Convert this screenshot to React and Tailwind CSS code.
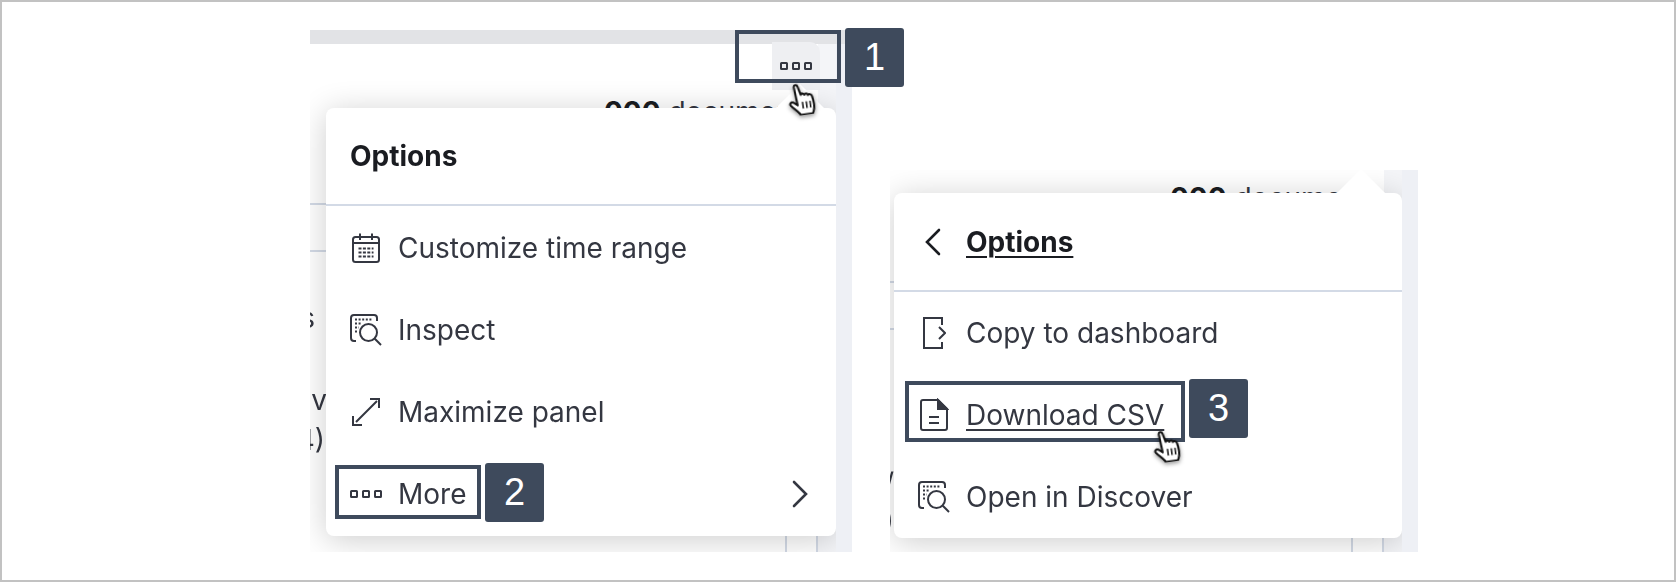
function Boxes({ className }) {
  return (
    <svg width="32" height="8" viewBox="0 0 32 8" fill="none" stroke="#343741" strokeWidth="2" className={className}>
      <rect x="1" y="1" width="6" height="6" rx="0.5" />
      <rect x="13" y="1" width="6" height="6" rx="0.5" />
      <rect x="25" y="1" width="6" height="6" rx="0.5" />
    </svg>
  );
}

function Calendar() {
  return (
    <svg width="30" height="32" viewBox="0 0 30 32" fill="none" stroke="#343741" strokeWidth="2">
      <rect x="2" y="5" width="26" height="25" rx="2.5" />
      <path d="M2 11h26M9 1.5V8M21 1.5V8" />
      <path strokeWidth="2" strokeDasharray="3 1.4" d="M7.5 16.5h15M7.5 20.5h15M7.5 24.5h15" />
    </svg>
  );
}

function Inspect() {
  return (
    <svg width="32" height="32" viewBox="0 0 32 32" fill="none" stroke="#343741" strokeWidth="2">
      <path d="M6 27H4a3 3 0 0 1-3-3V4a3 3 0 0 1 3-3h20a3 3 0 0 1 3 3v3" />
      <path strokeDasharray="2 1.6" d="M5 5.5h18M5 9.5h7M5 13.5h4M5 17.5h3" />
      <circle cx="18.5" cy="18.5" r="8.5" />
      <path d="M24.8 24.8 31 31" />
    </svg>
  );
}

function Maximize() {
  return (
    <svg width="30" height="30" viewBox="0 0 30 30" fill="none" stroke="#343741" strokeWidth="2">
      <path d="M19 2h9v9M2 19v9h9M26 4 5 25" />
    </svg>
  );
}

function CopyDash() {
  return (
    <svg width="24" height="34" viewBox="0 0 24 34" fill="none" stroke="#343741" strokeWidth="2">
      <path d="M20 9V2H2v30h18v-6" />
      <path d="M17 11l6 6-6 6" />
    </svg>
  );
}

function Doc() {
  return (
    <svg width="30" height="34" viewBox="0 0 30 34" fill="none" stroke="#343741" strokeWidth="2">
      <path d="M19 2H4a2 2 0 0 0-2 2v26a2 2 0 0 0 2 2h22a2 2 0 0 0 2-2V11z" />
      <path d="M19 2l9 9h-9z" fill="#343741" />
      <path d="M10 19h10M10 25h10" />
    </svg>
  );
}

function ChevronR() {
  return (
    <svg width="16" height="28" viewBox="0 0 16 28" fill="none" stroke="#343741" strokeWidth="2.6" strokeLinecap="round">
      <path d="M2 2l12 12L2 26" />
    </svg>
  );
}

function ChevronL() {
  return (
    <svg width="16" height="28" viewBox="0 0 16 28" fill="none" stroke="#1a1c21" strokeWidth="2.6" strokeLinecap="round">
      <path d="M14 2 2 14l12 12" />
    </svg>
  );
}

function Hand({ className }) {
  return (
    <svg width="32" height="32" viewBox="0 0 32 34" className={className + " -rotate-[8deg]"} style={{ filter: "drop-shadow(0 2px 2px rgba(0,0,0,.4))" }}>
      <path
        d="M8 3.500c-.2-2.600 3.400-3 4-.4l2.200 9.200c.6-1.800 3.400-1.600 3.800.4.800-1.600 3.400-1.200 3.800.8.900-1.200 3.600-.8 4 1.400.9 4 1.400 8 .9 12-.3 2.400-1.300 4.500-2.200 6.500H11.500c-1.500-3-6.500-7.500-9.200-11-1.600-2.300.8-4.300 3-3l4.200 3.500z"
        fill="#fff"
        stroke="#111"
        strokeWidth="2.200"
        strokeLinejoin="round"
      />
      <path d="M15 20v7M19 20v7M23 20v7" stroke="#111" strokeWidth="1.600" />
    </svg>
  );
}

function MenuRow({ icon, label, right, underline }) {
  return (
    <div className="h-[82px] flex items-center pl-6 pr-[28px]">
      <span className="w-8 flex items-center justify-center shrink-0 mr-4">{icon}</span>
      <span className={"text-[28px] text-[#343741] " + (underline ? "underline decoration-2 underline-offset-4" : "")}>{label}</span>
      {right && <span className="ml-auto">{right}</span>}
    </div>
  );
}

function Callout({ n, className, boxClass }) {
  return (
    <div className={"absolute z-30 flex items-start gap-1 " + className}>
      <div className={"mt-[2px] border-4 border-[#3e4a5c] " + boxClass} />
      <div className="w-[59px] h-[59px] rounded-[3px] bg-[#3e4a5c] text-white text-[38px] flex items-center justify-center font-['Liberation_Sans']">
        {n}
      </div>
    </div>
  );
}

function Shot({ width, height, children, topBar, top, fragments }) {
  return (
    <div className="relative overflow-hidden shrink-0" style={{ width, height }}>
      <div className="h-full flex flex-col">
        {topBar && <div className="h-[14px] bg-[#e2e3e6] shrink-0" />}
        <div className="flex-1 flex min-h-0">
          <div className="flex-1 bg-white flex flex-col min-w-0">
            {top}
            <div className="flex flex-col text-[28px] text-[#343741] [will-change:opacity]">{fragments}</div>
            <div className="mt-auto self-end h-[20px] w-[33px] border-x-2 border-[#d3dae6]" />
          </div>
          <div className="w-[18px] bg-[#f4f5f8]" />
          <div className="w-4 bg-[#eef0f5] relative z-20" />
        </div>
      </div>
      {children}
    </div>
  );
}

function DocCount({ className }) {
  return (
    <div className={"pr-[2px] text-right text-[28px] leading-[32px] text-[#343741] overflow-hidden whitespace-nowrap " + className}>
      <b className="text-[#1a1c21]">000</b> documents
    </div>
  );
}

const popShadow = "shadow-[0_4px_32px_rgba(0,0,0,0.2)]";
const sliver = "flex justify-end overflow-hidden whitespace-nowrap";

export default function App() {
  return (
    <div className="w-[1676px] h-[582px] border-2 border-[#c2c2c2] bg-white overflow-hidden font-['Inter',sans-serif] relative">
      <div className="flex items-start pl-[308px] pt-[28px] gap-[38px]">
        {/* left capture */}
        <Shot
          width={542}
          height={522}
          topBar
          top={
            <>
              <div className="relative -mt-[2px] -mr-[2px] h-[48px] flex justify-end">
                <div className="w-[48px] h-[48px] rounded-tr-[10px] bg-[#eeeff2] flex items-center justify-center">
                  <Boxes />
                </div>
              </div>
              <DocCount className="pt-[6px] h-[36px]" />
            </>
          }
          fragments={
            <>
              <div className="h-[79px] border-b-2 border-[#d3dae6] mr-[400px]" />
              <div className="h-[47px] border-b-2 border-[#d3dae6] mr-[400px]" />
              <div className={"h-[52px] leading-[52px] w-[5px] mt-[40px] " + sliver}>s</div>
              <div className={"h-[40px] leading-[40px] w-[17px] mt-[36px] " + sliver}>nv</div>
              <div className={"h-[40px] leading-[40px] w-[15px] " + sliver}>4)</div>
            </>
          }
        >
          <div className={"absolute left-[16px] top-[78px] w-[510px] h-[428px] bg-white rounded-[8px] z-10 " + popShadow}>
            <div className="absolute right-[19px] -top-[17px] w-[34px] h-[34px] bg-white rotate-45" />
            <div className="relative h-[98px] border-b-2 border-[#d3dae6] flex items-center pl-[24px] text-[28px] font-bold text-[#1a1c21]">
              Options
            </div>
            <div className="pt-px">
              <MenuRow icon={<Calendar />} label="Customize time range" />
              <MenuRow icon={<Inspect />} label="Inspect" />
              <MenuRow icon={<Maximize />} label="Maximize panel" />
              <MenuRow icon={<Boxes />} label="More" right={<ChevronR />} />
            </div>
          </div>
          <Hand className="absolute left-[477px] top-[53px] z-30" />
        </Shot>

        {/* right capture */}
        <div className="mt-[140px]">
          <Shot
            width={528}
            height={382}
            top={<DocCount className="pt-[12px] h-[48px]" />}
            fragments={
              <>
                <div className="h-[74px] border-b-2 border-[#d3dae6] mr-[480px]" />
                <div className="h-[47px] border-b-2 border-[#d3dae6] mr-[480px]" />
                <div className={"h-[36px] leading-[36px] w-[4px] mt-[135px] " + sliver}>/</div>
                <div className={"h-[36px] leading-[36px] w-[4px] " + sliver}>)</div>
              </>
            }
          >
            <div className={"absolute left-[4px] top-[23px] w-[508px] h-[345px] bg-white rounded-[8px] z-10 " + popShadow}>
              <div className="absolute right-[24px] -top-[17px] w-[34px] h-[34px] bg-white rotate-45" />
              <div className="relative h-[99px] border-b-2 border-[#d3dae6] flex items-center text-[28px] font-bold text-[#1a1c21]">
                <span className="w-[72px] pl-[31px] flex items-center"><ChevronL /></span>
                <span className="underline decoration-2 underline-offset-4">Options</span>
              </div>
              <MenuRow icon={<CopyDash />} label="Copy to dashboard" />
              <MenuRow icon={<Doc />} label="Download CSV" underline />
              <MenuRow icon={<Inspect />} label="Open in Discover" />
            </div>
          </Shot>
        </div>
      </div>

      {/* annotations */}
      <Callout n="1" className="left-[733px] top-[26px]" boxClass="w-[106px] h-[53px]" />
      <Callout n="2" className="left-[333px] top-[461px]" boxClass="w-[146px] h-[54px]" />
      <Callout n="3" className="left-[903px] top-[377px]" boxClass="w-[280px] h-[61px]" />
      <Hand className="absolute left-[1150px] top-[428px] z-40" />
    </div>
  );
}
